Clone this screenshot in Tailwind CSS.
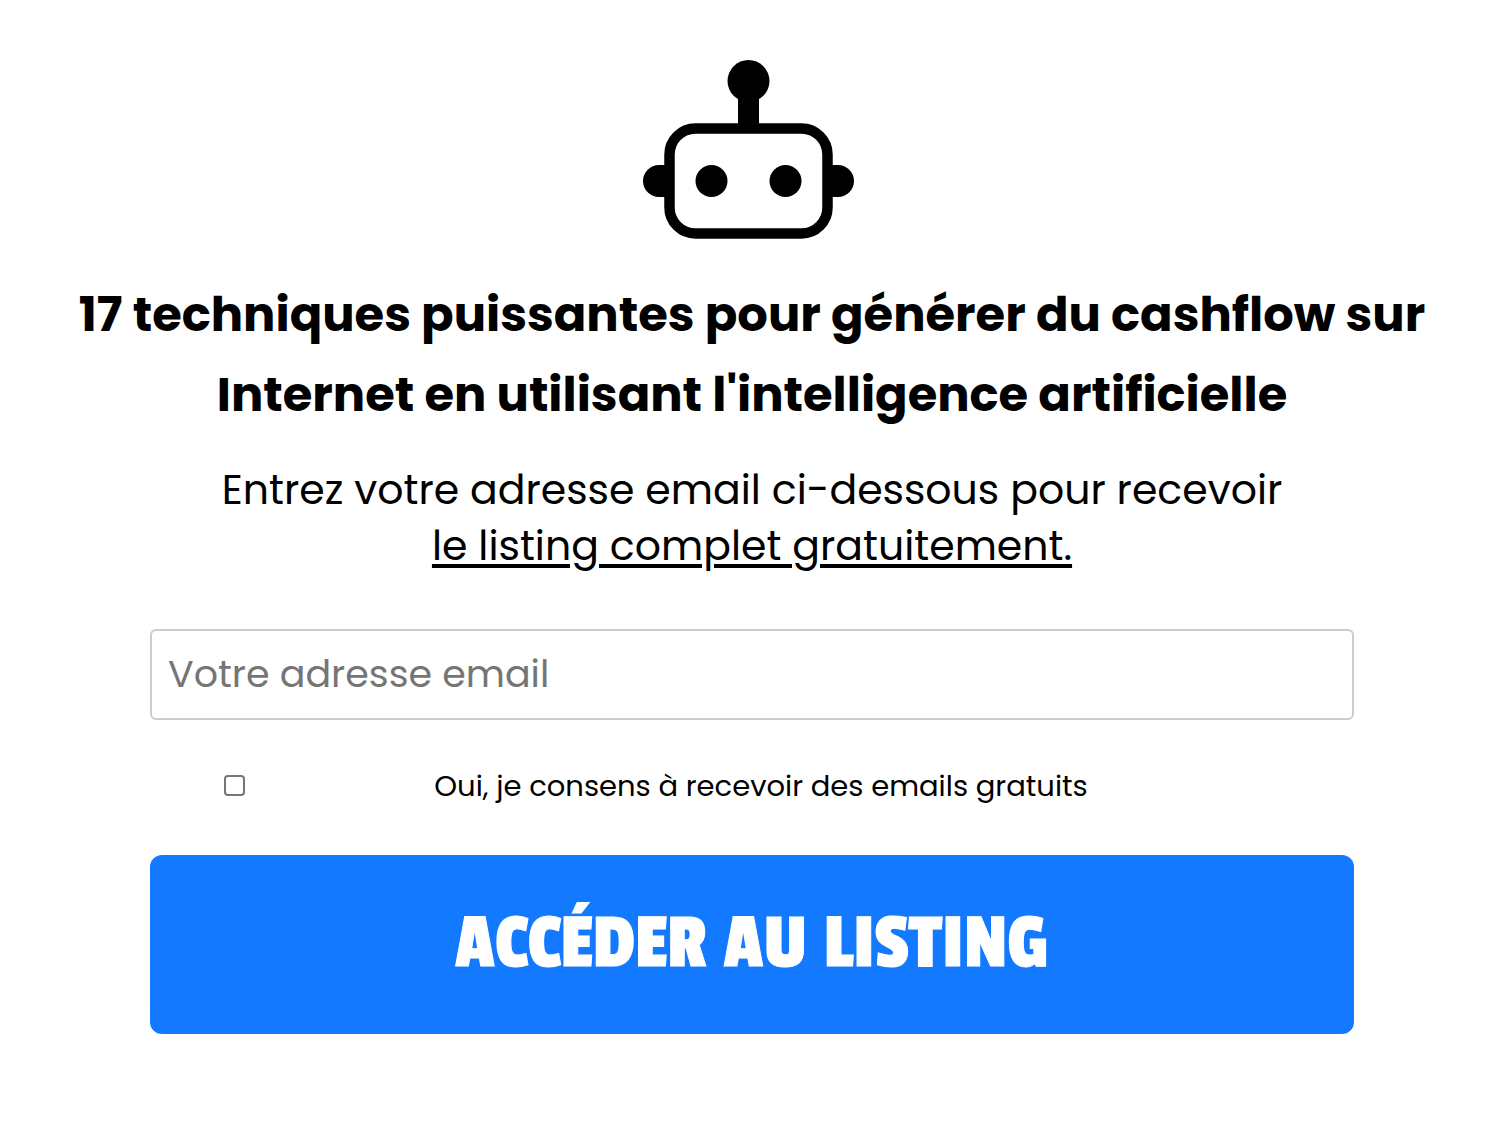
<!DOCTYPE html>
<html lang="fr">
<head>
  <meta charset="UTF-8" />
  <meta name="viewport" content="width=device-width, initial-scale=1" />
  <title>17 techniques puissantes</title>
  <script src="https://cdn.jsdelivr.net/npm/@tailwindcss/browser@4"></script>
</head>
<body class="min-h-screen bg-white text-black font-['Poppins','Inter',sans-serif]">
  <main class="flex flex-col items-center pl-5 pr-4 pt-[59px] pb-24">
    <!-- Robot -->
    <svg class="w-[212px] h-[180px] -ml-2" viewBox="0 0 212 180" fill="none" aria-hidden="true">
      <circle cx="106.500" cy="22" r="21" fill="#000" />
      <path d="M96 30h21v38h-21z" fill="#000" />
      <path d="M27 106H17a16 16 0 0 0 0 32h10zM185 106h11a16 16 0 0 1 0 32h-11z" fill="#000" />
      <rect x="27.500" y="69.500" width="158" height="105" rx="26" stroke="#000" stroke-width="10.500" />
      <circle cx="69.500" cy="122" r="16" fill="#000" />
      <circle cx="143.500" cy="122" r="16" fill="#000" />
    </svg>

    <!-- Headline -->
    <h1 class="mt-9 text-center text-[48px] leading-[80px] font-bold">
      17 techniques puissantes pour générer du cashflow sur<br />
      Internet en utilisant l'intelligence artificielle
    </h1>
    <p class="mt-[27px] text-center text-[41px] leading-[56px]">
      Entrez votre adresse email ci-dessous pour recevoir<br />
      <u class="underline decoration-4 underline-offset-4">le listing complet gratuitement.</u>
    </p>

    <!-- Form -->
    <form class="mt-[55px] flex w-full max-w-[1204px] flex-col">
      <input type="email" aria-label="Votre adresse email" placeholder="Votre adresse email"
        class="h-[91px] w-full rounded-md border-2 border-[#ccc] px-4 pb-0.5 text-[38px] placeholder:text-[#757575]" />
      <div class="mt-[43px] grid h-11 grid-cols-[28fr_147fr_25fr] items-center">
        <input type="checkbox" id="consent" class="size-[21px] appearance-none justify-self-center rounded-sm border-2 border-[#767676] bg-white checked:bg-[#137aff]" />
        <label for="consent" class="pt-0.5 text-center text-[29px]">Oui, je consens à recevoir des emails gratuits</label>
      </div>
      <button type="submit" class="mt-12 h-[179px] w-full rounded-xl bg-[#137aff] pb-1 text-[80px] leading-none font-normal text-white [-webkit-text-stroke:1px_white] font-['Passion_One','Roboto_Condensed',sans-serif]">ACCÉDER AU LISTING</button>
    </form>
  </main>
</body>
</html>
